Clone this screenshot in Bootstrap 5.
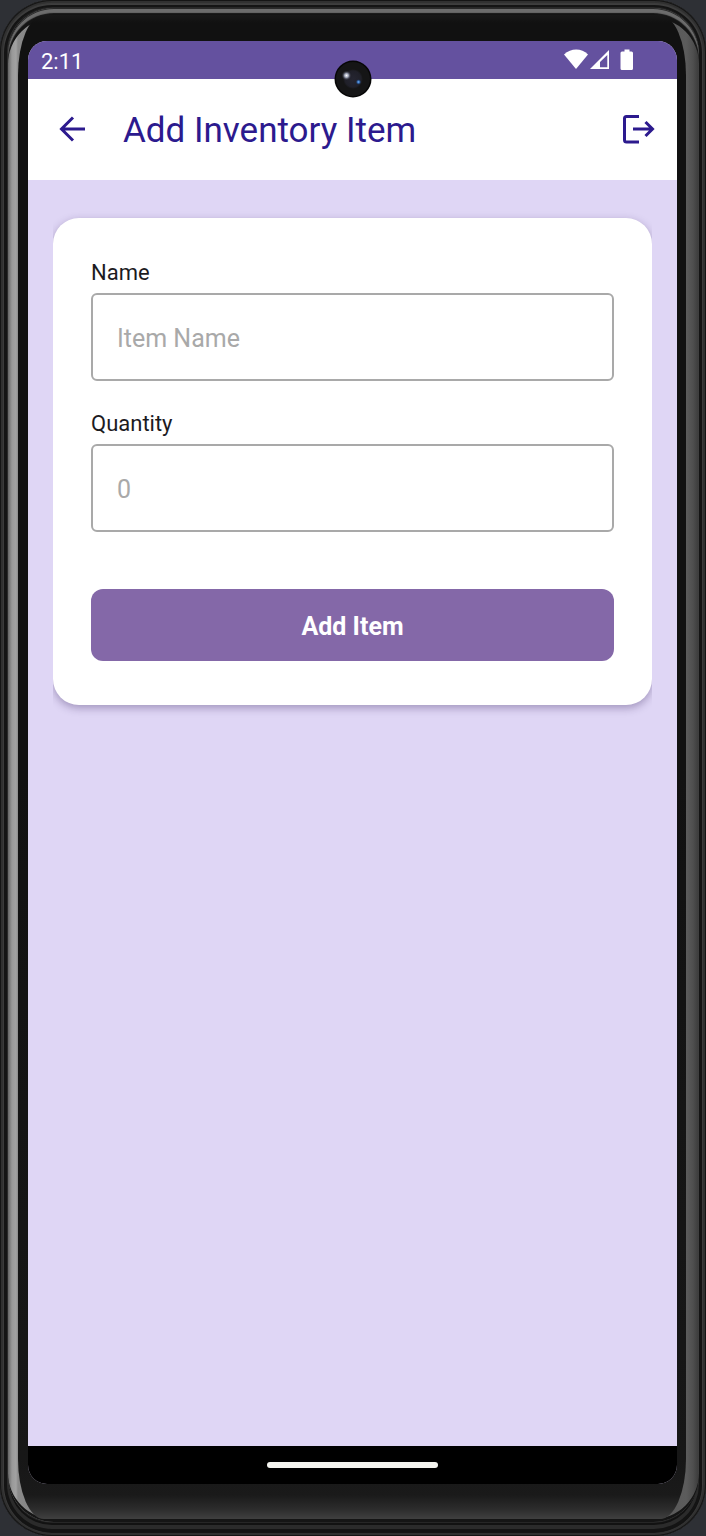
<!DOCTYPE html>
<html lang="en">
<head>
<meta charset="utf-8">
<meta name="viewport" content="width=device-width, initial-scale=1">
<title>Add Inventory Item</title>
<link href="https://cdn.jsdelivr.net/npm/bootstrap@5.3.0/dist/css/bootstrap.min.css" rel="stylesheet">
<style>
  body { background: #2e3035; font-family: Roboto, "Noto Sans", sans-serif; }

  /* Device frame: outer shell, metal rim, glass bezel, screen */
  .device-shell {
    padding: 8px 7px 14px 8px;
    border-radius: 52px;
    background: #262626;
    box-shadow: inset 0 0 0 1px #151515, inset 0 0 1px 3px #303030, inset 0 1px 0 4px #3e3e3e, inset 0 0 0 7px #141414, inset 0 -2px 0 9px #2b2b2b, inset 0 -3px 0 10px #121212;
  }
  .device-rim {
    padding: 7px 13px 3px 10px;
    border-radius: 46px;
    background: linear-gradient(90deg, #666 0, #999 4px, #a2a2a2 8px, #8a8a8a 10px, #222 50%, #5c5c5c calc(100% - 13px), #4f4f4f calc(100% - 6px), #3a3a3a 100%);
    box-shadow: inset 0 1px 0 #2a2a2a, inset 0 5px 1px #6c6c6c, inset 0 10px 0 #141414, inset 0 -3px 0 #151515;
  }
  .device-bezel {
    padding: 26px 9px 35px 10px;
    border-radius: 26px / 60px;
    background: linear-gradient(0deg, #404040 0, #2c2c2c 10px, #1a1a1a 24px, #171717 60px, #111 50%, #111 calc(100% - 8px), #181818 100%);
  }
  .device-screen { border-radius: 19px; background: #dfd6f5; }

  .status-bar { height: 38px; padding: 4px 43px 0 13px; background: #64519f; font-size: 22px; line-height: 34px; }
  .status-bar svg { margin-bottom: 4px; }
  .camera { width: 38px; height: 38px; top: 19px; }

  .app-bar { height: 101px; padding: 2px 20px 0 30px; color: #2c1a8e; }
  .app-bar h1 { font-size: 35px; line-height: 42px; margin-left: 36px; font-weight: 400; }
  .icon-button { color: inherit; line-height: 0; margin-bottom: 3px; }

  .page-content { padding: 38px 25px; }
  .card-clip { clip-path: inset(-24px 0); }
  .item-card { padding: 39px 38px 44px; border-radius: 26px; box-shadow: 0 3px 8px rgba(40, 20, 80, .34); }
  .field-group { margin-bottom: 27px; }
  .field-group .form-label { margin-bottom: 4px; font-size: 22px; line-height: 32px; color: #1c1b1f; }
  .field-group .form-control { height: 88px; padding: 2px 24px 0; border: 2px solid #a9a9a9; border-radius: 6px; font-size: 25px; }
  .field-group .form-control::placeholder { color: #a9a9a9; }
  .btn-add { margin-top: 57px; height: 72px; padding: 4px 12px 0; border-radius: 12px; background: #8468a8; color: #fff; font-size: 25px; font-weight: 700; }
  .btn-add:hover { background: #75599a; color: #fff; }

  .gesture-bar { height: 38px; }
  .gesture-pill { width: 171px; height: 6px; background: #f4f4f0; }
</style>
</head>
<body>
<div class="device-shell min-vh-100 d-flex flex-column">
  <div class="device-rim flex-grow-1 d-flex flex-column">
    <div class="device-bezel flex-grow-1 d-flex flex-column">
      <div class="device-screen position-relative overflow-hidden flex-grow-1 d-flex flex-column">

        <div class="status-bar d-flex justify-content-between align-items-center text-white">
          <span>2:11</span>
          <svg width="70" height="22" viewBox="0 0 70 22" fill="#fff" aria-hidden="true">
            <path d="M0 5.4C7-1 17.500-1 24 5.400L12 20Z"/>
            <path fill-rule="evenodd" d="M45 1V20H26ZM43.300 6L36 13V18.300H43.300Z"/>
            <path d="M60.500 .5h5v2h2q1.500 0 1.500 1.500v15.500q0 1.500-1.500 1.500h-9.500q-1.500 0-1.500-1.500v-15.500q0-1.500 1.500-1.500h2.500z"/>
          </svg>
        </div>

        <svg class="camera position-absolute start-50 translate-middle-x" viewBox="0 0 38 38" aria-hidden="true">
          <defs>
            <radialGradient id="lens"><stop offset="0" stop-color="#252531"/><stop offset=".8" stop-color="#202029"/><stop offset="1" stop-color="#151516"/></radialGradient>
            <radialGradient id="glint"><stop offset="0" stop-color="#fff"/><stop offset=".4" stop-color="#a0a6b8"/><stop offset="1" stop-color="#25252f" stop-opacity="0"/></radialGradient>
            <radialGradient id="spark"><stop offset="0" stop-color="#75b5ff"/><stop offset=".5" stop-color="#285796"/><stop offset="1" stop-color="#202029" stop-opacity="0"/></radialGradient>
          </defs>
          <circle cx="19" cy="19" r="18.500" fill="#060606"/>
          <circle cx="19" cy="19" r="17" fill="#151516"/>
          <circle cx="19" cy="19" r="10" fill="url(#lens)"/>
          <circle cx="12.500" cy="15.500" r="5" fill="url(#glint)"/>
          <circle cx="24.500" cy="22" r="3" fill="url(#spark)"/>
        </svg>

        <header class="app-bar d-flex align-items-center bg-white">
          <button type="button" class="icon-button btn border-0 p-0" aria-label="Back">
            <svg width="29" height="30" viewBox="0 0 29 30" fill="none" stroke="currentColor" stroke-width="3"><path d="M27 15H4M15 3.500L3.500 15L15 26.500"/></svg>
          </button>
          <h1 class="mb-0">Add Inventory Item</h1>
          <button type="button" class="icon-button btn border-0 p-0 ms-auto" aria-label="Log out">
            <svg width="36" height="32" viewBox="0 0 36 32" fill="none" stroke="currentColor" stroke-width="3"><path d="M18 3.500H5.500Q3.500 3.500 3.500 5.500V27Q3.500 29 5.500 29H18M12 16H32M24.500 9L31.500 16L24.500 23"/></svg>
          </button>
        </header>

        <main class="page-content flex-grow-1">
          <div class="card-clip">
            <form class="item-card card border-0">
              <div class="field-group">
                <label class="form-label d-block" for="item-name">Name</label>
                <input type="text" class="form-control" id="item-name" placeholder="Item Name">
              </div>
              <div class="field-group mb-0">
                <label class="form-label d-block" for="item-quantity">Quantity</label>
                <input type="text" inputmode="numeric" class="form-control" id="item-quantity" placeholder="0">
              </div>
              <button type="button" class="btn btn-add w-100 border-0">Add Item</button>
            </form>
          </div>
        </main>

        <div class="gesture-bar bg-black d-flex align-items-center justify-content-center">
          <div class="gesture-pill rounded-pill"></div>
        </div>
      </div>
    </div>
  </div>
</div>
<script src="https://cdn.jsdelivr.net/npm/bootstrap@5.3.0/dist/js/bootstrap.bundle.min.js"></script>
</body>
</html>
